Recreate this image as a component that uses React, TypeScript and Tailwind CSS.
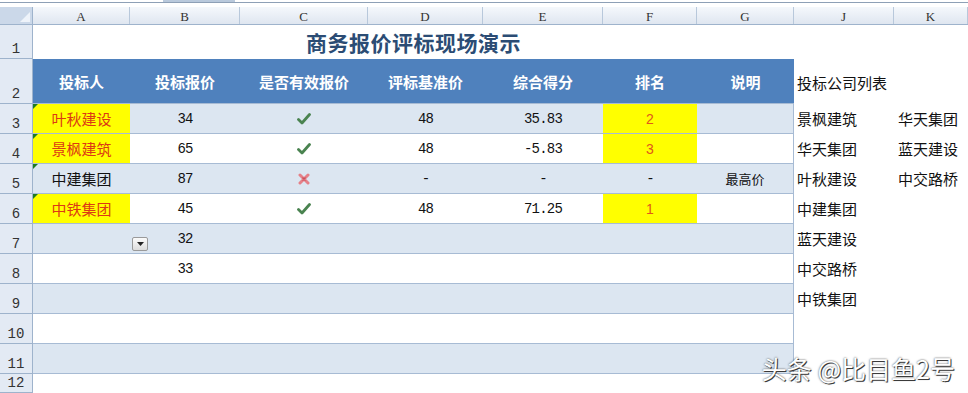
import React from 'react'

const headBorder = 'border-[#9eb3cc]'

type Cell = { text?: string; kind?: 'num' | 'cjk' | 'check' | 'cross' | 'rank' | 'note'; yellow?: boolean; red?: boolean; flag?: boolean }

const colW = ['w-[97px]', 'w-[110px]', 'w-[128px]', 'w-[115px]', 'w-[120px]', 'w-[94px]', 'w-[96px]']

const Check = () => (
  <svg width="14" height="12" viewBox="0 0 14 12">
    <path d="M1.5 6.5 L5 10 L12.5 1.5" fill="none" stroke="#4a8350" strokeWidth="2.8" strokeLinecap="round" strokeLinejoin="round" />
  </svg>
)

const Cross = () => (
  <svg width="12" height="12" viewBox="0 0 12 12">
    <path d="M2 2 L10 10 M10 2 L2 10" fill="none" stroke="#e58088" strokeWidth="3" strokeLinecap="round" />
    <path d="M4.5 4.5 L7.5 7.5 M7.5 4.5 L4.5 7.5" fill="none" stroke="#c9515c" strokeWidth="1.4" />
  </svg>
)

const RowHead = ({ n }: { n: number }) => (
  <div className={`w-[33px] shrink-0 border-r border-b ${headBorder} bg-[#e3eaf4] flex items-end justify-center text-[14px] leading-none pb-[2px] text-[#333] font-['Liberation_Mono',monospace]`}>
    {n}
  </div>
)

const DataCell = ({ c, w }: { c: Cell; w: string }) => {
  let content: React.ReactNode = null
  if (c.kind === 'check') content = <Check />
  else if (c.kind === 'cross') content = <Cross />
  else if (c.kind === 'num') content = <span className="font-['Liberation_Mono',monospace] text-[14px] tracking-[-0.8px] text-[#111]">{c.text}</span>
  else if (c.kind === 'rank') content = <span className="text-[14px] text-[#e0581a] font-['Liberation_Sans',sans-serif]">{c.text}</span>
  else if (c.kind === 'note') content = <span className="text-[13px] text-[#111]">{c.text}</span>
  else if (c.text) content = <span className={`text-[15px] ${c.red ? 'text-[#dc3a14]' : 'text-[#111]'}`}>{c.text}</span>
  return (
    <div className={`${w} shrink-0 relative flex items-center justify-center pt-[1px] ${c.yellow ? 'bg-[#ffff00]' : ''}`}>
      {c.flag && <div className="absolute top-0 left-0 w-0 h-0 border-t-[5px] border-r-[5px] border-t-[#1f7a25] border-r-transparent" />}
      {content}
    </div>
  )
}

const rows: { n: number; cells: Cell[]; j?: string; k?: string }[] = [
  {
    n: 3,
    cells: [
      { text: '叶秋建设', yellow: true, red: true, flag: true },
      { text: '34', kind: 'num' },
      { kind: 'check' },
      { text: '48', kind: 'num' },
      { text: '35.83', kind: 'num' },
      { text: '2', kind: 'rank', yellow: true },
      {},
    ],
    j: '景枫建筑',
    k: '华天集团',
  },
  {
    n: 4,
    cells: [
      { text: '景枫建筑', yellow: true, red: true, flag: true },
      { text: '65', kind: 'num' },
      { kind: 'check' },
      { text: '48', kind: 'num' },
      { text: '-5.83', kind: 'num' },
      { text: '3', kind: 'rank', yellow: true },
      {},
    ],
    j: '华天集团',
    k: '蓝天建设',
  },
  {
    n: 5,
    cells: [
      { text: '中建集团', flag: true },
      { text: '87', kind: 'num' },
      { kind: 'cross' },
      { text: '-', kind: 'num' },
      { text: '-', kind: 'num' },
      { text: '-', kind: 'num' },
      { text: '最高价', kind: 'note' },
    ],
    j: '叶秋建设',
    k: '中交路桥',
  },
  {
    n: 6,
    cells: [
      { text: '中铁集团', yellow: true, red: true, flag: true },
      { text: '45', kind: 'num' },
      { kind: 'check' },
      { text: '48', kind: 'num' },
      { text: '71.25', kind: 'num' },
      { text: '1', kind: 'rank', yellow: true },
      {},
    ],
    j: '中建集团',
  },
  { n: 7, cells: [{}, { text: '32', kind: 'num' }, {}, {}, {}, {}, {}], j: '蓝天建设' },
  { n: 8, cells: [{}, { text: '33', kind: 'num' }, {}, {}, {}, {}, {}], j: '中交路桥' },
  { n: 9, cells: [{}, {}, {}, {}, {}, {}, {}], j: '中铁集团' },
  { n: 10, cells: [{}, {}, {}, {}, {}, {}, {}] },
  { n: 11, cells: [{}, {}, {}, {}, {}, {}, {}] },
]

const headers = ['投标人', '投标报价', '是否有效报价', '评标基准价', '综合得分', '排名', '说明']

const letters = [
  { l: 'A', w: 'w-[97px]' },
  { l: 'B', w: 'w-[110px]' },
  { l: 'C', w: 'w-[128px]' },
  { l: 'D', w: 'w-[115px]' },
  { l: 'E', w: 'w-[120px]' },
  { l: 'F', w: 'w-[94px]' },
  { l: 'G', w: 'w-[97px]' },
  { l: 'J', w: 'w-[100px]' },
  { l: 'K', w: 'w-[74px]' },
]

export default function App() {
  return (
    <div className="w-[968px] h-[393px] overflow-hidden relative bg-white font-['Noto_Sans_CJK_SC',sans-serif]">
      {/* formula bar edge */}
      <div className="h-[7px] flex flex-col">
        <div className="h-[2px] flex">
          <div className="w-[163px]" />
          <div className="w-[72px] bg-[#b9c9dc]" />
        </div>
        <div className="h-[1px] bg-[#8ea0b6]" />
      </div>

      {/* column letters */}
      <div className={`h-[18px] flex border-b ${headBorder}`}>
        <div className={`w-[33px] shrink-0 bg-[#cbd8e9] border-r ${headBorder} flex items-end justify-end p-[2px]`}>
          <svg width="10" height="10" viewBox="0 0 10 10">
            <path d="M10 0 L10 10 L0 10 Z" fill="#eef3fa" />
          </svg>
        </div>
        {letters.map((c) => (
          <div
            key={c.l}
            className={`${c.w} shrink-0 border-r border-[#b8c8db] bg-gradient-to-b from-[#f5f8fc] to-[#dfe6f0] flex items-center justify-center text-[13px] text-[#333] font-['Liberation_Serif',serif] leading-none pt-[1px]`}
          >
            {c.l}
          </div>
        ))}
      </div>

      {/* row 1: title */}
      <div className="h-[34px] flex">
        <RowHead n={1} />
        <div className="w-[761px] flex items-center justify-center pt-[1px]">
          <span className="text-[21px] font-bold text-[#2b4c74] tracking-[0.5px]">商务报价评标现场演示</span>
        </div>
      </div>

      {/* row 2: header */}
      <div className="h-[45px] flex">
        <RowHead n={2} />
        <div className="w-[761px] flex bg-[#4f81bd] border-b border-[#a7bbd4]">
          {headers.map((h, i) => (
            <div key={h} className={`${i === 6 ? 'w-[97px]' : colW[i]} shrink-0 flex items-center justify-center pt-[3px] text-[15px] font-bold text-white`}>
              {h}
            </div>
          ))}
        </div>
        <div className="flex items-center pl-[3px] pt-[4px] text-[15px] text-[#111]">投标公司列表</div>
      </div>

      {/* data rows */}
      {rows.map((r) => (
        <div key={r.n} className="h-[30px] flex">
          <RowHead n={r.n} />
          <div className={`w-[761px] relative flex border-b border-r border-[#a7bbd4] ${r.n % 2 === 1 ? 'bg-[#dce6f1]' : 'bg-white'}`}>
            {r.cells.map((c, i) => (
              <DataCell key={i} c={c} w={colW[i]} />
            ))}
            {r.n === 7 && (
              <div className="absolute z-10 top-[13px] left-[99px] w-[16px] h-[14px] rounded-[2px] border border-[#9a9a9a] bg-gradient-to-b from-[#fbfbfb] to-[#dcdcdc] flex items-center justify-center">
                <svg width="7" height="4" viewBox="0 0 7 4">
                  <path d="M0 0 L7 0 L3.5 4 Z" fill="#222" />
                </svg>
              </div>
            )}
          </div>
          <div className="w-[100px] shrink-0 flex items-center pl-[3px] pt-[1px] text-[15px] text-[#111]">{r.j}</div>
          <div className="w-[74px] shrink-0 flex items-center pl-[4px] pt-[1px] text-[15px] text-[#111]">{r.k}</div>
        </div>
      ))}

      {/* row 12 */}
      <div className="h-[19px] flex">
        <RowHead n={12} />
      </div>

      {/* watermark */}
      <div className="absolute right-[13px] bottom-[12px] text-[25px] leading-none text-white [text-shadow:1px_1px_0_#3a3a3a,0_0_2px_#3a3a3a]">
        头条 @比目鱼2号
      </div>
    </div>
  )
}
